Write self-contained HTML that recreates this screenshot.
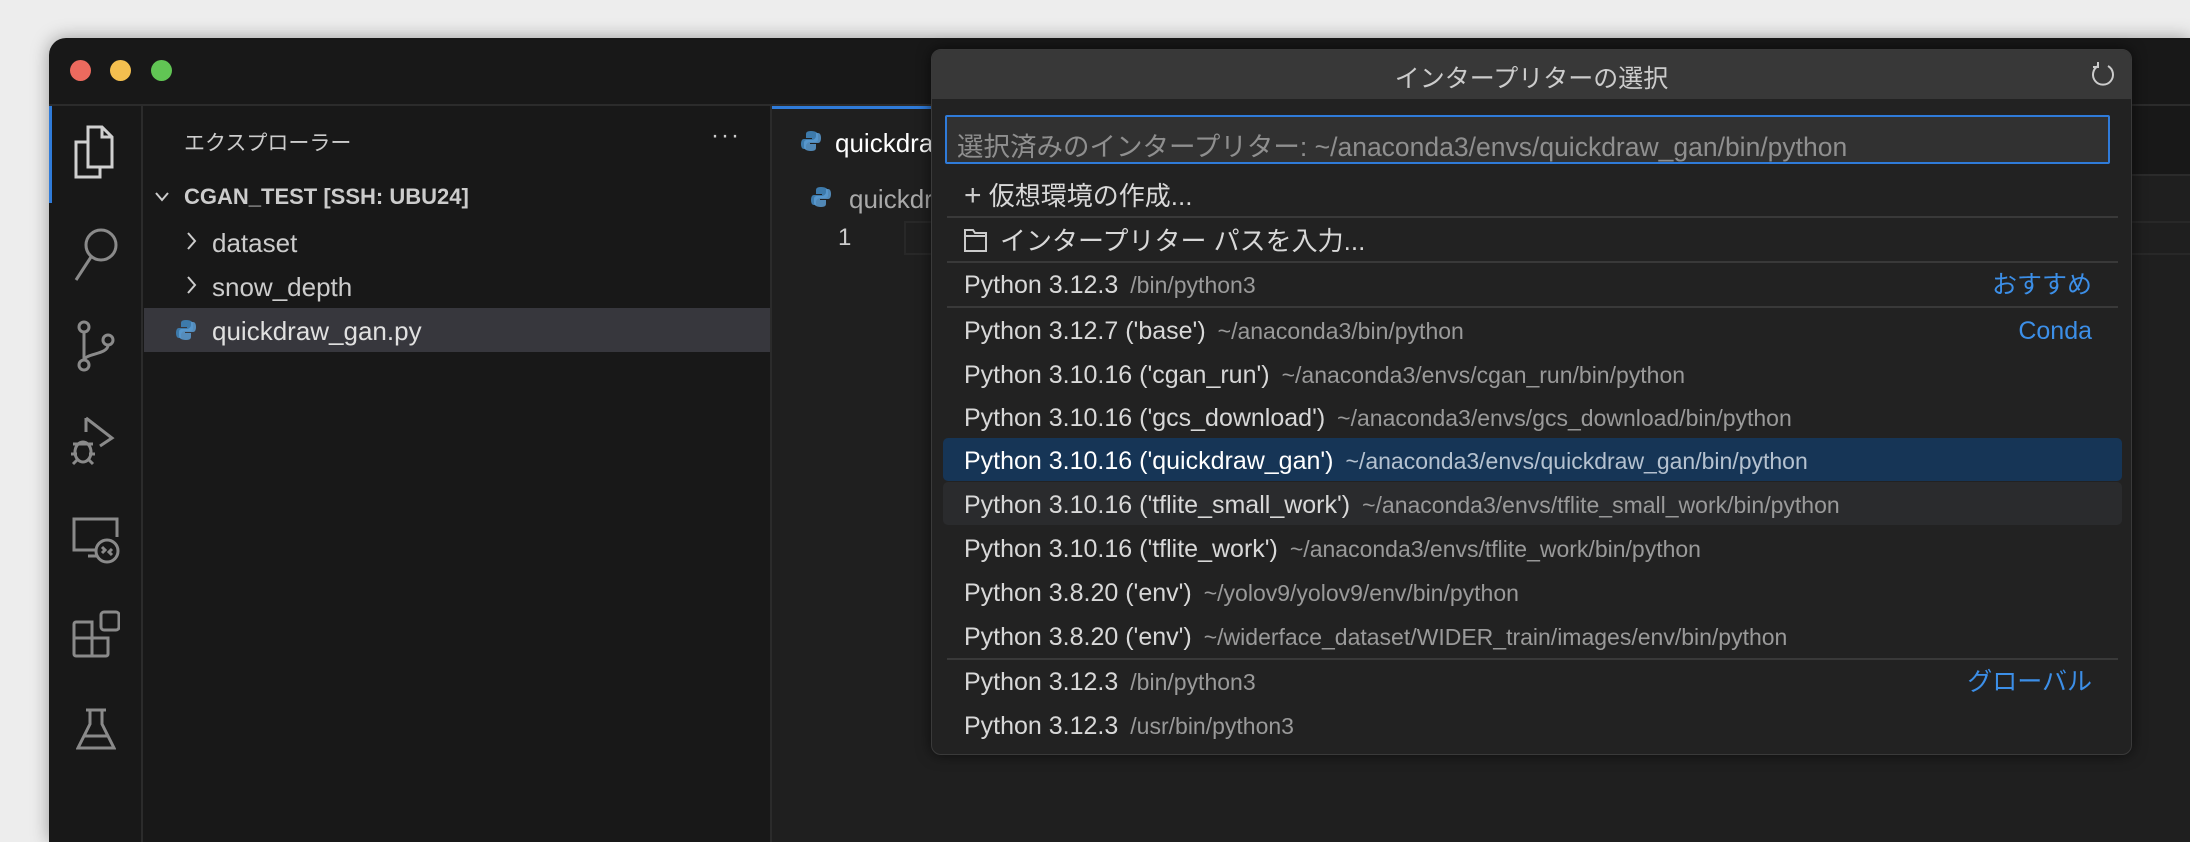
<!DOCTYPE html>
<html><head><meta charset="utf-8">
<style>
*{margin:0;padding:0;box-sizing:border-box}
html,body{width:2190px;height:842px;overflow:hidden}
body{background:#ededed;font-family:"Liberation Sans","Noto Sans CJK JP",sans-serif;position:relative}
.abs{position:absolute}
#win{left:49px;top:38px;width:2141px;height:804px;background:#181818;border-radius:17px 0 0 0;box-shadow:0 0 18px rgba(0,0,0,.35);overflow:hidden}
.dot{position:absolute;top:60px;width:21px;height:21px;border-radius:50%}
.t{position:absolute;white-space:nowrap;color:#cccccc}
.row{position:absolute;left:32px;font-size:25px;color:#d8d8d8;white-space:nowrap;line-height:46px;height:44px}
.row .p{color:#9a9a9a;font-size:23px;margin-left:12px}
.lab{position:absolute;right:39px;color:#3c8fe8;font-size:25px;line-height:46px}
.sep{position:absolute;left:15px;right:13px;height:2px;background:#393939}
svg{position:absolute}
</style></head><body>
<div id="win" class="abs"></div>
<div class="dot" style="left:70px;background:#ec6a5e"></div>
<div class="dot" style="left:110px;background:#f4bf4f"></div>
<div class="dot" style="left:151px;background:#61c554"></div>
<div class="abs" style="left:49px;top:104px;width:2141px;height:2px;background:#2b2b2b"></div>
<div class="abs" style="left:141px;top:106px;width:2px;height:736px;background:#2b2b2b"></div>
<div class="abs" style="left:49px;top:106px;width:3px;height:97px;background:#2f7bd9"></div>
<svg style="left:72px;top:124px" width="46" height="56" viewBox="0 0 46 56" fill="none" stroke="#d0d0d0" stroke-width="3"><path d="M16 3h14l10 10v30H16z"/><path d="M30 3v10h10"/><path d="M16 18H4v35h24v-10"/></svg>
<svg style="left:72px;top:226px" width="50" height="56" viewBox="0 0 50 56" fill="none" stroke="#8a8a8a" stroke-width="3"><circle cx="29" cy="19" r="15"/><path d="M19 31L4 54"/></svg>
<svg style="left:76px;top:320px" width="42" height="52" viewBox="0 0 42 52" fill="none" stroke="#8a8a8a" stroke-width="3"><circle cx="8" cy="7" r="5"/><circle cx="8" cy="45" r="5"/><circle cx="32" cy="20" r="5"/><path d="M8 12v28M32 25c0 10-24 8-24 16"/></svg>
<svg style="left:70px;top:416px" width="52" height="54" viewBox="0 0 52 54" fill="none" stroke="#8a8a8a" stroke-width="3"><path d="M16 2l26 20-12 8"/><path d="M16 2v14"/><ellipse cx="13" cy="36" rx="8" ry="10"/><path d="M3 28h20M1 38h6M19 38h6M3 48l4-4M23 48l-4-4"/></svg>
<svg style="left:72px;top:516px" width="48" height="48" viewBox="0 0 48 48" fill="none" stroke="#8a8a8a" stroke-width="3"><path d="M24 34H2V3h43v18"/><path d="M16 40h10"/><circle cx="35" cy="35" r="11"/><path d="M30 37l3-3-3-3M40 33l-3 3 3 3"/></svg>
<svg style="left:72px;top:610px" width="48" height="50" viewBox="0 0 48 50" fill="none" stroke="#8a8a8a" stroke-width="3"><rect x="29" y="2" width="18" height="18" rx="3"/><path d="M4 12h16v34H4a2 2 0 0 1-2-2V14a2 2 0 0 1 2-2zM20 28h16v16a2 2 0 0 1-2 2H20M2 28h18"/></svg>
<svg style="left:76px;top:708px" width="40" height="44" viewBox="0 0 40 44" fill="none" stroke="#8a8a8a" stroke-width="3"><path d="M10 2h20M14 2v14L2 40h36L26 16V2M8 28h24"/></svg>
<div class="abs" style="left:770px;top:106px;width:2px;height:736px;background:#2b2b2b"></div>
<div class="t" style="left:184px;top:127px;font-size:21px;color:#cccccc">エクスプローラー</div>
<div class="t" style="left:711px;top:122px;font-size:24px;letter-spacing:2px">···</div>
<svg style="left:155px;top:192px" width="14" height="10" viewBox="0 0 14 10" fill="none" stroke="#cccccc" stroke-width="2"><path d="M1 1l6 7 6-7"/></svg>
<div class="t" style="left:184px;top:184px;font-size:22px;font-weight:bold">CGAN_TEST [SSH: UBU24]</div>
<svg style="left:186px;top:231px" width="12" height="20" viewBox="0 0 12 20" fill="none" stroke="#cccccc" stroke-width="2"><path d="M2 2l7 8-7 8"/></svg>
<div class="t" style="left:212px;top:228px;font-size:26px">dataset</div>
<svg style="left:186px;top:275px" width="12" height="20" viewBox="0 0 12 20" fill="none" stroke="#cccccc" stroke-width="2"><path d="M2 2l7 8-7 8"/></svg>
<div class="t" style="left:212px;top:272px;font-size:26px">snow_depth</div>
<div class="abs" style="left:144px;top:308px;width:626px;height:44px;background:#37373d"></div>
<svg style="left:176px;top:319px" width="20" height="22" viewBox="0 0 20 22"><path d="M10 1c-5 0-5 2-5 4v3h6v1H3c-2 0-3 2-3 5s1 5 3 5h2v-3c0-2 2-4 4-4h5c2 0 3-1 3-3V5c0-2-2-4-7-4z" fill="#3d7aab"/><path d="M10 21c5 0 5-2 5-4v-3H9v-1h8c2 0 3-2 3-5s-1-5-3-5h-2v3c0 2-2 4-4 4H6c-2 0-3 1-3 3v4c0 2 2 4 7 4z" fill="#5b9bd1" opacity=".85"/></svg>
<div class="t" style="left:212px;top:316px;font-size:26px;color:#e0e0e0">quickdraw_gan.py</div>
<div class="abs" style="left:772px;top:106px;width:1418px;height:736px;background:#1f1f1f"></div>
<div class="abs" style="left:772px;top:106px;width:1418px;height:68px;background:#181818"></div>
<div class="abs" style="left:772px;top:174px;width:1418px;height:2px;background:#2b2b2b"></div>
<div class="abs" style="left:772px;top:106px;width:200px;height:70px;background:#1f1f1f;border-top:3px solid #2f7bd9"></div>
<svg style="left:801px;top:130px" width="20" height="22" viewBox="0 0 20 22"><path d="M10 1c-5 0-5 2-5 4v3h6v1H3c-2 0-3 2-3 5s1 5 3 5h2v-3c0-2 2-4 4-4h5c2 0 3-1 3-3V5c0-2-2-4-7-4z" fill="#3d7aab"/><path d="M10 21c5 0 5-2 5-4v-3H9v-1h8c2 0 3-2 3-5s-1-5-3-5h-2v3c0 2-2 4-4 4H6c-2 0-3 1-3 3v4c0 2 2 4 7 4z" fill="#5b9bd1" opacity=".85"/></svg>
<div class="t" style="left:835px;top:128px;font-size:26px;color:#ffffff">quickdraw_gan.py</div>
<svg style="left:811px;top:186px" width="20" height="22" viewBox="0 0 20 22"><path d="M10 1c-5 0-5 2-5 4v3h6v1H3c-2 0-3 2-3 5s1 5 3 5h2v-3c0-2 2-4 4-4h5c2 0 3-1 3-3V5c0-2-2-4-7-4z" fill="#3d7aab"/><path d="M10 21c5 0 5-2 5-4v-3H9v-1h8c2 0 3-2 3-5s-1-5-3-5h-2v3c0 2-2 4-4 4H6c-2 0-3 1-3 3v4c0 2 2 4 7 4z" fill="#5b9bd1" opacity=".85"/></svg>
<div class="t" style="left:849px;top:184px;font-size:26px;color:#a9a9a9">quickdraw_gan.py</div>
<div class="t" style="left:838px;top:224px;font-size:24px;color:#cccccc">1</div>
<div class="abs" style="left:904px;top:221px;width:1290px;height:34px;border:2px solid #282828"></div>
<div class="abs" style="left:931px;top:49px;width:1201px;height:706px;background:#222222;border:1px solid #3a3a3a;border-radius:10px;box-shadow:0 0 14px rgba(0,0,0,.6);overflow:hidden">
  <div class="abs" style="left:0;top:0;width:100%;height:49px;background:#383838"></div>
  <div class="t" style="left:0;width:100%;text-align:center;top:9px;font-size:25px;color:#cccccc">インタープリターの選択</div>
  <svg style="left:1158px;top:11px" width="26" height="28" viewBox="0 0 26 28" fill="none" stroke="#cccccc" stroke-width="2"><path d="M8 5A10 10 0 1 0 18 5"/><path d="M8 1v5H3"/></svg>
  <div class="abs" style="left:13px;top:65px;width:1165px;height:49px;background:#313131;border:2px solid #2f7bd9;border-radius:2px"></div>
  <div class="t" style="left:25px;top:75px;font-size:26.5px;color:#8f8f8f">選択済みのインタープリター: ~/anaconda3/envs/quickdraw_gan/bin/python</div>
  <div class="row" style="top:123px;font-size:26px"><span style="font-size:30px;color:#ccc;font-weight:300">+</span> 仮想環境の作成...</div>
  <div class="sep" style="top:166px"></div>
  <svg style="left:32px;top:178px" width="24" height="24" viewBox="0 0 24 24" fill="none" stroke="#cccccc" stroke-width="2"><path d="M1 2h8l2 3h11v18H1z M1 8h21"/></svg>
  <div class="row" style="top:168px;left:68px;font-size:26px">インタープリター パスを入力...</div>
  <div class="sep" style="top:211px"></div>
  <div class="row" style="top:212px">Python 3.12.3<span class="p">/bin/python3</span></div><div class="lab" style="top:212px">おすすめ</div>
  <div class="sep" style="top:256px"></div>
  <div class="row" style="top:258px">Python 3.12.7 ('base')<span class="p">~/anaconda3/bin/python</span></div><div class="lab" style="top:258px">Conda</div>
  <div class="row" style="top:302px">Python 3.10.16 ('cgan_run')<span class="p">~/anaconda3/envs/cgan_run/bin/python</span></div>
  <div class="row" style="top:345px">Python 3.10.16 ('gcs_download')<span class="p">~/anaconda3/envs/gcs_download/bin/python</span></div>
  <div class="abs" style="left:11px;top:388px;width:1179px;height:43px;background:#163556;border-radius:5px"></div>
  <div class="row" style="top:388px;color:#fff">Python 3.10.16 ('quickdraw_gan')<span class="p" style="color:#b5c2d0">~/anaconda3/envs/quickdraw_gan/bin/python</span></div>
  <div class="abs" style="left:11px;top:432px;width:1179px;height:43px;background:#2a2b2d;border-radius:5px"></div>
  <div class="row" style="top:432px">Python 3.10.16 ('tflite_small_work')<span class="p">~/anaconda3/envs/tflite_small_work/bin/python</span></div>
  <div class="row" style="top:476px">Python 3.10.16 ('tflite_work')<span class="p">~/anaconda3/envs/tflite_work/bin/python</span></div>
  <div class="row" style="top:520px">Python 3.8.20 ('env')<span class="p">~/yolov9/yolov9/env/bin/python</span></div>
  <div class="row" style="top:564px">Python 3.8.20 ('env')<span class="p">~/widerface_dataset/WIDER_train/images/env/bin/python</span></div>
  <div class="sep" style="top:608px"></div>
  <div class="row" style="top:609px">Python 3.12.3<span class="p">/bin/python3</span></div><div class="lab" style="top:609px">グローバル</div>
  <div class="row" style="top:653px">Python 3.12.3<span class="p">/usr/bin/python3</span></div>
</div>
</body></html>
